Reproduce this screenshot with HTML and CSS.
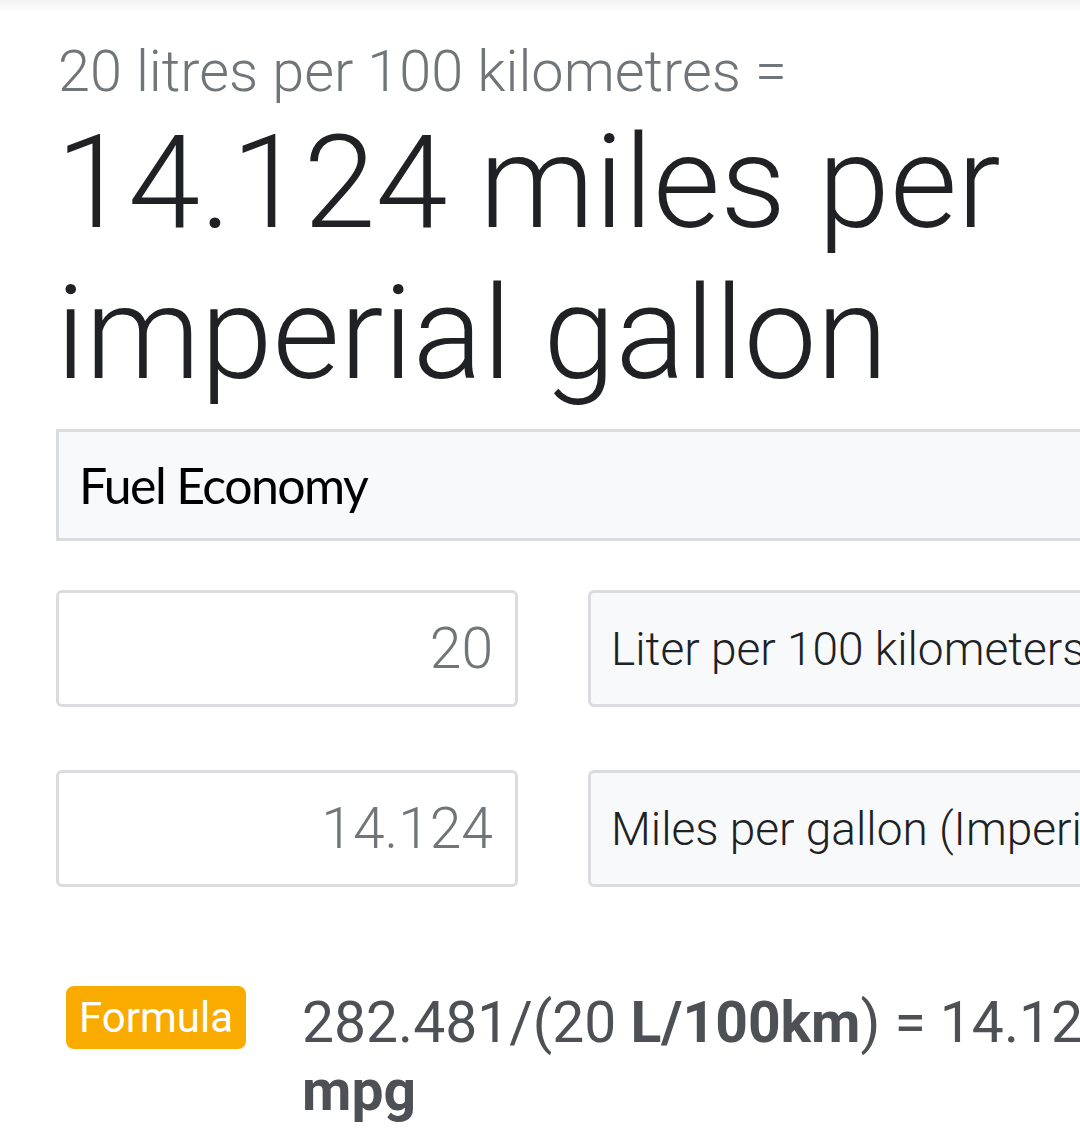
FILE: index.html
```html
<!DOCTYPE html>
<html lang="en">
<head>
  <meta charset="UTF-8">
  <title>Fuel Economy converter</title>
  <link rel="stylesheet" href="styles.css">
</head>
<body>
  <div class="pagina">
    <div class="sombra"></div>

    <!-- Resultado -->
    <div class="resultado">
      <div class="pergunta">20 litres per 100 kilometres =</div>
      <div class="resposta">14.124 miles per imperial gallon</div>
    </div>

    <!-- Conversor -->
    <div class="conversor">
      <div class="categoria">Fuel Economy</div>

      <div class="linha">
        <div class="valor">20</div>
        <div class="unidade">Liter per 100 kilometers</div>
      </div>

      <div class="linha segunda">
        <div class="valor">14.124</div>
        <div class="unidade">Miles per gallon (Imperial)</div>
      </div>

      <div class="formula">
        <span class="etiqueta">Formula</span>
        <div class="conta">282.481/(20 <b>L/100km</b>) = 14.124 <b>mpg</b></div>
      </div>
    </div>
  </div>
</body>
</html>
```

FILE: styles.css
```css
* {
  box-sizing: border-box;
}

html, body {
  margin: 0;
  padding: 0;
  background: #fff;
  overflow: hidden;
}

body {
  font-family: Roboto, 'Liberation Sans', sans-serif;
}

.pagina {
  position: relative;
  width: 1080px;
  height: 1128px;
  overflow: hidden;
}

.sombra {
  position: absolute;
  top: 0;
  left: 0;
  right: 0;
  height: 12px;
  background: linear-gradient(to bottom, #f3f3f3, #fff);
}

.resultado {
  position: relative;
  padding: 37px 0 0 58px;
  white-space: nowrap;
}

.pergunta {
  font-size: 57.6px;
  line-height: 70px;
  font-weight: 300;
  color: #70757a;
}

.resposta {
  width: 960px;
  margin-left: -2px;
  font-size: 130px;
  line-height: 151px;
  font-weight: 300;
  color: #202124;
  white-space: normal;
}

.conversor {
  padding: 20px 0 0 56px;
}

.categoria {
  width: 1100px;
  height: 112px;
  display: flex;
  align-items: center;
  padding-left: 20px;
  background: #f8f9fa;
  border: 3px solid #dadce0;
  font-family: Lato, 'Open Sans', sans-serif;
  font-size: 50px;
  letter-spacing: -1.6px;
  color: #000;
}

.linha {
  display: flex;
  gap: 70px;
  margin-top: 49px;
  width: 1200px;
}

.linha.segunda {
  margin-top: 63px;
}

.valor {
  flex: 0 0 462px;
  height: 117px;
  display: flex;
  align-items: center;
  justify-content: flex-end;
  padding-right: 22px;
  background: #fff;
  border: 3px solid #dadce0;
  border-radius: 6px;
  font-size: 57px;
  font-weight: 300;
  color: #70757a;
}

.unidade {
  flex: 0 0 560px;
  height: 117px;
  display: flex;
  align-items: center;
  padding-left: 20px;
  background: #f8f9fa;
  border: 3px solid #dadce0;
  border-radius: 6px;
  font-size: 46px;
  font-weight: 300;
  color: #202124;
  white-space: nowrap;
  overflow: hidden;
}

.formula {
  display: flex;
  align-items: flex-start;
  gap: 56px;
  margin-top: 99px;
  margin-left: 10px;
  width: 1200px;
}

.etiqueta {
  flex: 0 0 180px;
  height: 63px;
  padding: 0 13px;
  display: flex;
  align-items: center;
  background: #f9ab00;
  border-radius: 8px;
  font-size: 42px;
  color: #fff;
}

.conta {
  flex: 0 0 920px;
  margin-top: 3px;
  font-size: 57px;
  line-height: 68px;
  color: #4d5156;
}

.conta b {
  font-weight: 700;
}
```
